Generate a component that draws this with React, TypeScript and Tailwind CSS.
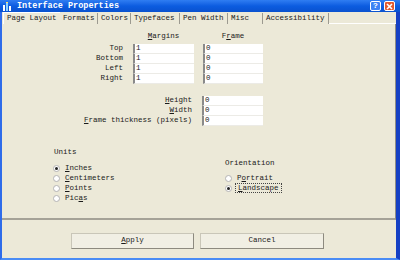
import type { ReactNode } from 'react'

const TABS = ['Page Layout', 'Formats', 'Colors', 'Typefaces', 'Pen Width', 'Misc', 'Accessibility']
const TAB_WIDTHS = [57, 38, 33, 49, 48, 35, 66]

function U({ children }: { children: ReactNode }) {
  return <span className="underline underline-offset-1">{children}</span>
}

function Field({ value }: { value: string }) {
  return (
    <div className="flex h-[10px] items-center border-b border-l-2 border-b-[#ecebe6] border-l-[#8a8a8a] bg-white pl-[1px] leading-none">
      {value}
    </div>
  )
}

function Radio({ checked, children, focus }: { checked?: boolean; children: ReactNode; focus?: boolean }) {
  return (
    <div className="flex h-[10px] items-center">
      <span className="flex h-[7px] w-[7px] items-center justify-center rounded-full border border-[#b4b4b4] bg-white">
        {checked && <span className="h-[3px] w-[3px] rounded-full bg-[#222]" />}
      </span>
      <span
        className={
          focus
            ? 'ml-[3px] border border-dotted border-[#444] px-[2px] leading-[8px]'
            : 'ml-[3px] px-[2px] leading-[8px]'
        }
      >
        {children}
      </span>
    </div>
  )
}

export default function App() {
  return (
    <div className="flex h-[260px] w-[400px] flex-col bg-[#ece9d8] font-['Liberation_Mono',monospace] text-[7.5px] text-[#1a1a1a]">
      {/* title bar */}
      <div className="flex h-[12px] shrink-0 items-center bg-gradient-to-b from-[#2f7df2] via-[#0c5ce0] to-[#0a52cf] pl-[3px] pr-[5px]">
        <svg width="10" height="9" viewBox="0 0 10 9">
          <rect x="0" y="3" width="2" height="6" fill="#ffffff" />
          <rect x="3" y="1" width="2" height="8" fill="#8fd3ff" />
          <rect x="6" y="4" width="2" height="5" fill="#ffffff" />
          <rect x="3" y="0" width="2" height="1" fill="#ffe06a" />
        </svg>
        <span className="ml-[4px] text-[8.5px] font-bold leading-none text-white">Interface Properties</span>
        <div className="ml-auto flex gap-[3px]">
          <div className="flex h-[10px] w-[11px] items-center justify-center rounded-[2px] border border-white bg-[#3c82f4] text-[8px] font-bold leading-none text-white">
            ?
          </div>
          <div className="flex h-[10px] w-[11px] items-center justify-center rounded-[2px] border border-white bg-[#e2582e]">
            <svg width="7" height="7" viewBox="0 0 7 7">
              <path d="M1 1L6 6M6 1L1 6" stroke="#fff" strokeWidth="1.6" />
            </svg>
          </div>
        </div>
      </div>

      <div className="flex min-h-0 flex-1 flex-col border-b-2 border-l-2 border-r-4 border-b-[#4a8cf5] border-l-[#2f6cea] border-r-[#1540c4]">
        {/* tabs */}
        <div className="flex h-[12px] shrink-0 items-end pl-[1px]">
          {TABS.map((t, i) => (
            <div
              key={t}
              style={{ width: TAB_WIDTHS[i] }}
              className={
                i === 0
                  ? 'flex h-[12px] items-center border-l border-t border-white pl-[3px] leading-none'
                  : 'flex h-[11px] items-center border-r border-r-[#9c9a90] pl-[3px] leading-none'
              }
            >
              {t}
            </div>
          ))}
          <div className="h-[11px] flex-1 border-b border-b-white" />
        </div>

        {/* panel */}
        <div className="flex h-[196px] shrink-0 flex-col border-b-2 border-r border-b-[#a5a297] border-r-[#8f8d84] pt-[9px]">
          <div className="flex">
            <div className="flex w-[123px] flex-col items-end pt-[11px] pr-[2px]">
              <div className="flex h-[10px] items-center">Top</div>
              <div className="flex h-[10px] items-center">Bottom</div>
              <div className="flex h-[10px] items-center">Left</div>
              <div className="flex h-[10px] items-center">Right</div>
            </div>
            <div className="ml-[8px] w-[61px]">
              <div className="flex h-[11px] items-start justify-center leading-none">
                <span>
                  <U>M</U>argins
                </span>
              </div>
              <Field value="1" />
              <Field value="1" />
              <Field value="1" />
              <Field value="1" />
            </div>
            <div className="ml-[9px] w-[60px]">
              <div className="flex h-[11px] items-start justify-center leading-none">
                <span>
                  F<U>r</U>ame
                </span>
              </div>
              <Field value="0" />
              <Field value="0" />
              <Field value="0" />
              <Field value="0" />
            </div>
          </div>

          <div className="mt-[12px] flex">
            <div className="flex w-[191px] flex-col items-end pr-[1px]">
              <div className="flex h-[10px] items-center">
                <span>
                  <U>H</U>eight
                </span>
              </div>
              <div className="flex h-[10px] items-center">
                <span>
                  <U>W</U>idth
                </span>
              </div>
              <div className="flex h-[10px] items-center">
                <span>
                  <U>F</U>rame thickness (pixels)
                </span>
              </div>
            </div>
            <div className="ml-[9px] w-[61px]">
              <Field value="0" />
              <Field value="0" />
              <Field value="0" />
            </div>
          </div>

          <div className="mt-[23px] flex">
            <div className="ml-[51px] w-[172px]">
              <div className="ml-[1px] h-[14px] leading-none">Units</div>
              <Radio checked>
                <U>I</U>nches
              </Radio>
              <Radio>
                <U>C</U>entimeters
              </Radio>
              <Radio>
                <U>P</U>oints
              </Radio>
              <Radio>
                Pic<U>a</U>s
              </Radio>
            </div>
            <div className="mt-[11px]">
              <div className="h-[13px] leading-none">Orientation</div>
              <Radio>
                P<U>o</U>rtrait
              </Radio>
              <Radio checked focus>
                <U>L</U>andscape
              </Radio>
            </div>
          </div>
        </div>

        {/* buttons */}
        <div className="flex justify-center gap-[6px] pt-[13px] pr-[3px]">
          <button
            type="button"
            className="flex h-[16px] w-[123px] items-center justify-center border border-[#c9c6b8] border-b-[#8d8a7f] border-r-[#8d8a7f] bg-[#f1efe4] leading-none"
          >
            <span>
              <U>A</U>pply
            </span>
          </button>
          <button
            type="button"
            className="flex h-[16px] w-[124px] items-center justify-center border border-[#c9c6b8] border-b-[#8d8a7f] border-r-[#8d8a7f] bg-[#f1efe4] leading-none"
          >
            Cancel
          </button>
        </div>
      </div>
    </div>
  )
}
